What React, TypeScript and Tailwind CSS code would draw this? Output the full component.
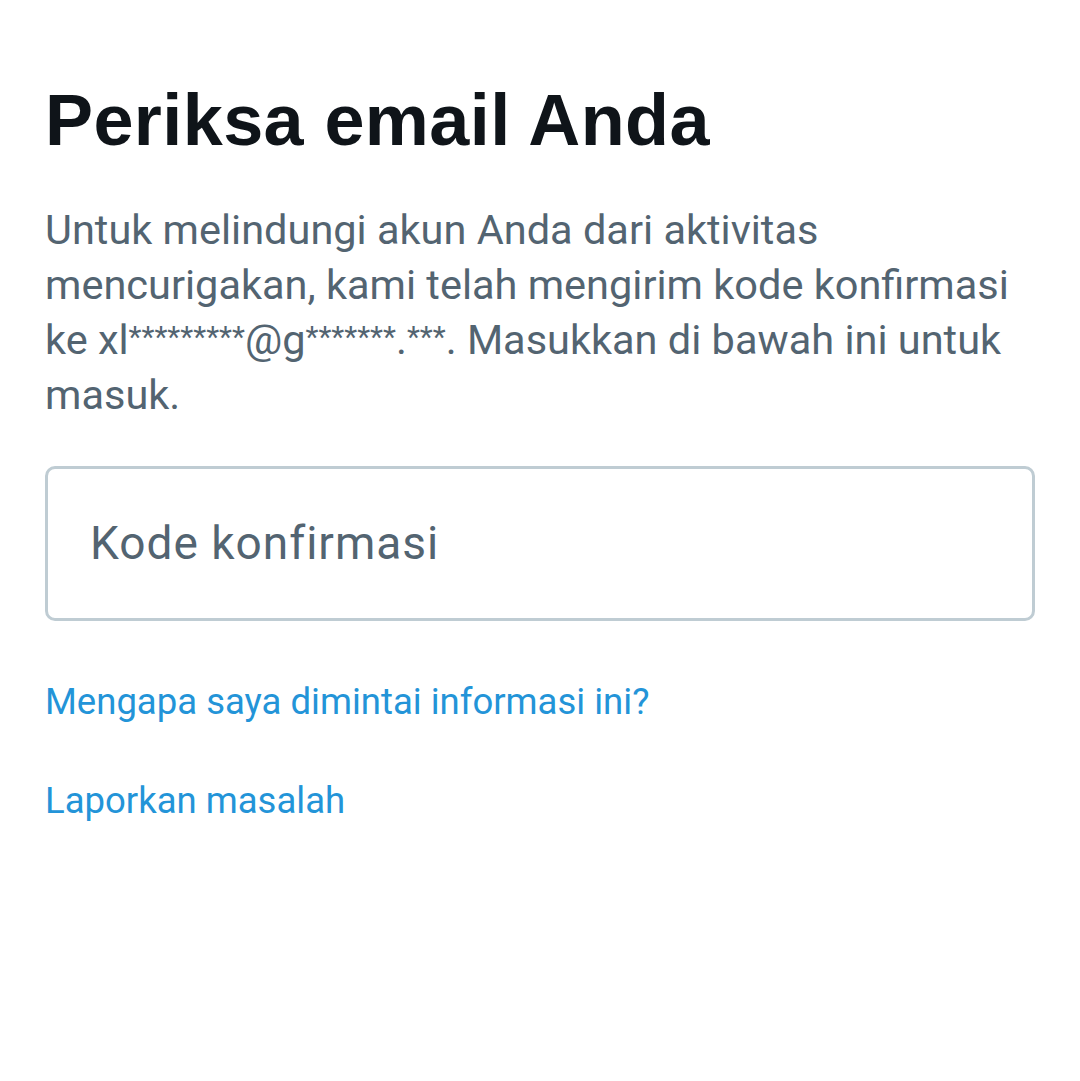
function Stars({ n }: { n: number }) {
  return <span className="align-[7px] text-[30px] leading-none">{'*'.repeat(n)}</span>
}

export default function App() {
  return (
    <div className="min-h-[1081px] w-full bg-white px-[45px]">
      <h1 className="pt-[84px] font-['Liberation_Sans',Arial,sans-serif] text-[72px] font-bold leading-[72px] tracking-[0.4px] text-[#0f1419]">
        Periksa email Anda
      </h1>
      <p className="mt-[46px] font-['Roboto',sans-serif] text-[41.5px] leading-[55px] text-[#536471]">
        Untuk melindungi akun Anda dari aktivitas mencurigakan, kami telah mengirim kode konfirmasi ke xl
        <Stars n={9} />@g<Stars n={7} />.<Stars n={3} />. Masukkan di bawah ini untuk masuk.
      </p>
      <div className="mt-[44px] flex h-[155px] items-center rounded-[10px] border-[3px] border-[#bfccd3] pl-[42px]">
        <input
          type="text"
          placeholder="Kode konfirmasi"
          className="w-full bg-transparent font-['Roboto',sans-serif] text-[46px] tracking-[1px] text-[#0f1419] outline-none placeholder:text-[#536471]"
        />
      </div>
      <div className="mt-[61px] flex flex-col items-start gap-[59px] font-['Roboto',sans-serif] text-[36.5px] leading-[40px] text-[#2394d8]">
        <a href="#">Mengapa saya dimintai informasi ini?</a>
        <a href="#">Laporkan masalah</a>
      </div>
    </div>
  )
}
